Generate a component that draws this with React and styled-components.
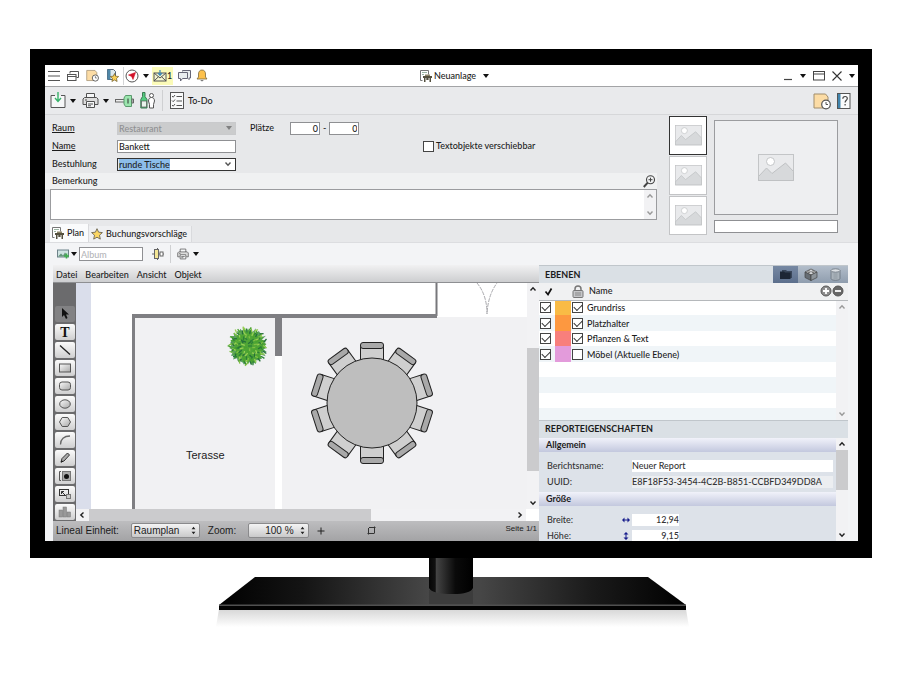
import React, { useState } from "react";
import styled, { createGlobalStyle } from "styled-components";

const INITIAL_LAYERS = [
  { name: "Grundriss", color: "#f9bb45", visible: true, locked: true },
  { name: "Platzhalter", color: "#fd9840", visible: true, locked: true },
  { name: "Pflanzen & Text", color: "#f87f7c", visible: true, locked: true },
  { name: "Möbel (Aktuelle Ebene)", color: "#e39bdb", visible: true, locked: false },
];

const MENU = ["Datei", "Bearbeiten", "Ansicht", "Objekt"];

const TOOLS = [
  { id: "Auswahl", icon: <path d="M5 2v9l2-2 2 4 1.500-1L9 8.500h3z" fill="#111" /> },
  {
    id: "Text",
    icon: (
      <text x="8" y="13" textAnchor="middle" fontFamily="Liberation Serif, serif" fontWeight="700" fontSize="14" fill="#111">
        T
      </text>
    ),
  },
  { id: "Linie", icon: <path d="M3 3.500L13 12.500" stroke="#222" strokeWidth="1.300" /> },
  { id: "Rechteck", icon: <rect x="2.500" y="4" width="11" height="8" fill="url(#shape)" stroke="#555" /> },
  { id: "Abgerundet", icon: <rect x="2.500" y="4" width="11" height="8" rx="2.500" fill="url(#shape)" stroke="#555" /> },
  { id: "Ellipse", icon: <ellipse cx="8" cy="8" rx="5.300" ry="4.200" fill="url(#shape)" stroke="#555" /> },
  { id: "Polygon", icon: <path d="M5.200 3.500h5.600L13.500 8l-2.700 4.500H5.200L2.500 8z" fill="url(#shape)" stroke="#555" /> },
  { id: "Bogen", icon: <path d="M3.500 12.500C3.500 7 7 4 13 4" fill="none" stroke="#666" strokeWidth="1.300" /> },
  {
    id: "Stift",
    icon: (
      <g>
        <path d="M4 12l1-3.500L10.500 3l2 2L7 11z" fill="#aaa" stroke="#333" />
        <path d="M3.500 13l1.500-2.500 1 1z" fill="#111" />
      </g>
    ),
  },
  {
    id: "Bild",
    icon: (
      <g>
        <rect x="5.500" y="3.500" width="8" height="9" fill="#aaa" stroke="#777" />
        <path d="M4 3.500H2.500v9H4" fill="none" stroke="#555" />
        <circle cx="9.500" cy="8.500" r="2.500" fill="#111" />
      </g>
    ),
  },
  {
    id: "Skalieren",
    icon: (
      <g fill="none" stroke="#333">
        <rect x="2.500" y="3.500" width="9" height="6" />
        <path d="M4.500 8V5.500H7M4.500 5.500l5 5" />
        <rect x="9.500" y="8.500" width="4" height="4" fill="#ccc" stroke="#777" />
      </g>
    ),
  },
  {
    id: "Diagramm",
    icon: (
      <g fill="#999" stroke="#777" strokeWidth=".5">
        <rect x="2" y="6" width="3.500" height="7" />
        <rect x="6" y="3" width="3.500" height="10" />
        <rect x="10" y="8" width="3.500" height="5" />
      </g>
    ),
  },
];

// ---------- icons ----------

const Caret = () => (
  <svg width="6" height="4" viewBox="0 0 6 4" aria-hidden="true">
    <path d="M0 0h6L3 4z" fill="#111" />
  </svg>
);

const Chevron = ({ dir = "up", color = "#222" }) => {
  const turn = { up: 0, right: 90, down: 180, left: 270 }[dir];
  return (
    <svg width="8" height="8" viewBox="0 0 8 8" aria-hidden="true">
      <path d="M1.500 5.500L4 2.800l2.500 2.700" fill="none" stroke={color} strokeWidth="1.400" transform={`rotate(${turn} 4 4)`} />
    </svg>
  );
};

const MenuIcon = () => (
  <svg width="12" height="12" viewBox="0 0 12 12">
    <path d="M0 1.500h12M0 6h12M0 10.500h12" stroke="#555" />
  </svg>
);

const WindowsIcon = () => (
  <svg width="12" height="12" viewBox="0 0 12 12" fill="#fff" stroke="#555">
    <path d="M3 3.500v-2h8.500v6H9.500" />
    <rect x=".5" y="4.500" width="8.500" height="6" />
    <path d="M.5 6.500h9" />
  </svg>
);

const FolderClock = ({ size = 13 }) => (
  <svg width={size} height={size} viewBox="0 0 18 17">
    <path d="M1 15.500V1.500h11.500l2.500 3v11z" fill="#fcdca5" stroke="#a08d6c" />
    <circle cx="13" cy="12" r="4.300" fill="#fff" stroke="#555" strokeWidth="1.200" />
    <path d="M13 9.500V12h2" fill="none" stroke="#555" />
  </svg>
);

const DocStar = () => (
  <svg width="13" height="13" viewBox="0 0 13 13">
    <path d="M1.500.5h6l2 2v8h-8z" fill="#dde9ee" stroke="#567" />
    <path d="M1.500.5h3v10h-3z" fill="#4f87a8" />
    <path d="M8.500 4.500l1.200 2.700 3 .3-2.200 2 .6 3-2.600-1.500L5.900 12.500l.6-3-2.200-2 3-.3z" fill="#f9cf55" stroke="#6b5a2a" strokeWidth=".7" />
  </svg>
);

const Compass = () => (
  <svg width="14" height="14" viewBox="0 0 14 14">
    <circle cx="7" cy="7" r="6" fill="#fff" stroke="#555" />
    <path d="M10.500 3.500L8 10.500 6.600 7.400 3.500 6z" fill="#d3132a" stroke="#d3132a" strokeWidth=".6" />
  </svg>
);

const Mail = () => (
  <svg width="14" height="12" viewBox="0 0 14 12" fill="none" stroke="#555">
    <rect x="1" y="3" width="12" height="8" fill="#f4f5d0" />
    <path d="M1 3l6 5 6-5M1 11l4.500-4.300M13 11L8.500 6.700" />
    <path d="M7 0v5M5 3.200L7 5.300l2-2.100" stroke="#3a86b5" strokeWidth="1.200" />
  </svg>
);

const Chat = () => (
  <svg width="13" height="12" viewBox="0 0 13 12" fill="#e9edf0" stroke="#667">
    <path d="M4.500 1.500V.5h8v7.500H11v2" />
    <path d="M.5 2.500h9v6H4.500l-2 2.500V8.500h-2z" />
  </svg>
);

const Bell = () => (
  <svg width="12" height="13" viewBox="0 0 12 13">
    <path d="M6 1C3.500 1 2.500 3 2.500 5v3L1 10h10L9.500 8V5c0-2-1-4-3.500-4z" fill="#fdc14c" stroke="#7b6a3d" strokeWidth=".8" />
    <path d="M4.500 11.300a1.500 1 0 003 0z" fill="#555" />
  </svg>
);

const PlanIcon = () => (
  <svg width="12" height="12" viewBox="0 0 12 12">
    <path d="M2.500 10.500h-2V.5h8v4" fill="#fff" stroke="#777" />
    <path d="M2 2.500h5M2 4.500h2" stroke="#9ab5a2" />
    <path d="M3 6h9v2H3zM4 8h1.500v4H4zM9.500 8H11v4H9.500zM6.300 8h2.300v2H6.300z" fill="#54503f" />
    <path d="M5 4.500h5V6H5z" fill="#8c8468" />
  </svg>
);

const MinimizeIcon = () => (
  <svg width="9" height="10" viewBox="0 0 9 10">
    <path d="M0 8.500h8" stroke="#444" strokeWidth="1.200" />
  </svg>
);

const MaximizeIcon = () => (
  <svg width="12" height="10" viewBox="0 0 12 10" fill="none" stroke="#444">
    <rect x=".5" y=".5" width="11" height="8.500" />
    <path d="M.5 3h11" />
  </svg>
);

const CloseIcon = () => (
  <svg width="10" height="10" viewBox="0 0 10 10">
    <path d="M.5.5l9 9M9.500.5l-9 9" stroke="#333" strokeWidth="1.100" />
  </svg>
);

const SaveIcon = () => (
  <svg width="16" height="17" viewBox="0 0 16 17" fill="none">
    <path d="M5 3.500H1v12h14v-12h-4" fill="#f6f7f8" stroke="#555" />
    <path d="M8 0v9M5 6l3 3.500L11 6" stroke="#38b36b" strokeWidth="1.400" />
  </svg>
);

const Printer = ({ size = 17 }) => (
  <svg width={size} height={size} viewBox="0 0 17 17" fill="#f6f7f8" stroke="#505050">
    <path d="M4.500 6V1.500h8V6" />
    <path d="M4 12.500H1V7l1.500-1.500h12L16 7v5.500h-3" fill="#ddd" />
    <path d="M4.500 9.500h8v6h-8z" />
    <path d="M6 12h5M6 13.800h3M3 8h2" />
  </svg>
);

const Connector = () => (
  <svg width="19" height="14" viewBox="0 0 19 14" stroke="#666">
    <rect x=".5" y="5.500" width="9" height="2.500" fill="#eee" />
    <path d="M10.500 1.500h6v11h-6L9 10V4z" fill="#9be5ae" stroke="#5a9a6c" />
    <path d="M13 4.500v5" stroke="#333" />
    <path d="M17 5v4h1.500V5z" fill="#eee" />
  </svg>
);

const Guests = () => (
  <svg width="15" height="17" viewBox="0 0 15 17">
    <path d="M2.500.5h2.500v4l2 3v8.500H.8V7.500l1.700-3z" fill="#53cc80" stroke="#3d7a53" />
    <path d="M1.500 9h5v6h-5z" fill="#e9f4ec" stroke="#555" strokeWidth=".7" />
    <circle cx="11.500" cy="3.500" r="2" fill="#fff" stroke="#555" />
    <path d="M11.500 5.500c-2 0-3 1.500-3 3.500l1 3.500v3.500h4v-3.500l1-3.500c0-2-1-3.500-3-3.500z" fill="#fff" stroke="#555" />
  </svg>
);

const Checklist = () => (
  <svg width="14" height="17" viewBox="0 0 14 17" fill="none" stroke="#555">
    <rect x=".5" y=".5" width="13" height="16" fill="#f9fafa" />
    <path d="M2 4l1.200 1.200L5 3M2 8.500l1.200 1.200L5 7.500M2 13l1.200 1.200L5 12M6.500 4.500H12M6.500 9H12M6.500 13.500H12" />
  </svg>
);

const HelpIcon = () => (
  <svg width="14" height="16" viewBox="0 0 14 16">
    <rect x=".5" y=".5" width="12.500" height="15" fill="#fafbfb" stroke="#555" />
    <path d="M1 1h2.500v14H1z" fill="#4185ad" />
    <path d="M5.800 5.800c0-1.500.9-2.300 2.300-2.300s2.200.8 2.200 2c0 1.800-2.200 1.800-2.200 4M8.100 11v1.500" fill="none" stroke="#444" strokeWidth="1.200" />
  </svg>
);

const ZoomIcon = () => (
  <svg width="12" height="13" viewBox="0 0 12 13" fill="none" stroke="#444">
    <circle cx="7.500" cy="4.700" r="4" strokeWidth="1.100" />
    <path d="M5.500 4.700h4M7.500 2.700v4" />
    <path d="M4.700 7.700L.8 12" strokeWidth="2" />
  </svg>
);

const Picture = ({ width = 27 }) => (
  <svg width={width} height={(width * 3) / 4} viewBox="0 0 36 27">
    <rect x=".5" y=".5" width="35" height="26" fill="#e9eaec" stroke="#c3c5c7" />
    <path d="M.5 22.500L8.500 14l5.500 5.500L27.500 9l8 8.500v9H.5z" fill="#d7d9db" stroke="#bfc1c3" />
    <circle cx="12.500" cy="7.500" r="4" fill="#fff" stroke="#c3c5c7" />
  </svg>
);

const Star = () => (
  <svg width="12" height="12" viewBox="0 0 12 12">
    <path d="M6 .7l1.600 3.500 3.800.4-2.900 2.600.8 3.900L6 9.200l-3.300 1.900.8-3.900L.6 4.600l3.800-.4z" fill="#fbd663" stroke="#6d6553" strokeWidth=".9" />
  </svg>
);

const AddImage = () => (
  <svg width="13" height="10" viewBox="0 0 13 10">
    <rect x=".5" y="1" width="11" height="7" fill="#cfe3e2" stroke="#6d8289" />
    <path d="M1 7.500l3-3 2 2 2-3 3 4z" fill="#64957a" />
    <path d="M9.500 4.500v5M7 7h5" stroke="#3fae4e" strokeWidth="1.600" />
  </svg>
);

const AlignIcon = () => (
  <svg width="12" height="12" viewBox="0 0 12 12" stroke="#666" fill="#fff">
    <path d="M0 6h12M5.500 0v12" />
    <rect x="2.500" y="1.500" width="4" height="9" fill="#f4e695" />
    <rect x="8" y="4" width="3" height="4" />
  </svg>
);

const LayersIcon = () => (
  <svg width="13" height="11" viewBox="0 0 13 11">
    <path d="M3 1h4l1 1h5v7H3z" fill="#39465a" />
    <path d="M1 2.500h4l1 1h5.500V10H1z" fill="#1d2635" />
  </svg>
);

const BlockIcon = () => (
  <svg width="14" height="13" viewBox="0 0 14 13" stroke="#444" strokeWidth=".7">
    <path d="M1 4l6-3 6 3-6 3z" fill="#d5d8db" />
    <path d="M1 4v5.500l6 3V7z" fill="#666d74" />
    <path d="M13 4v5.500l-6 3V7z" fill="#8d949a" />
    <ellipse cx="5" cy="3.800" rx="1.300" ry=".9" fill="#fff" />
    <ellipse cx="9" cy="3.800" rx="1.300" ry=".9" fill="#fff" />
  </svg>
);

const DatabaseIcon = () => (
  <svg width="11" height="13" viewBox="0 0 11 13" stroke="#68727c" strokeWidth=".8">
    <path d="M1 2.500v8c0 1 2 1.800 4.500 1.800s4.500-.8 4.500-1.800v-8z" fill="#aab3bb" />
    <ellipse cx="5.500" cy="2.500" rx="4.500" ry="1.700" fill="#dce0e4" />
    <path d="M3.500 6h4M3.500 8h4M3.500 10h4" stroke="#8a949d" />
  </svg>
);

const Lock = () => (
  <svg width="12" height="13" viewBox="0 0 12 13">
    <path d="M3 6V4a3 3 0 016 0v2" fill="none" stroke="#777" strokeWidth="1.500" />
    <rect x="1" y="5.500" width="10" height="7" rx="1" fill="#c5c6c8" stroke="#777" />
    <path d="M3 8h6M3 10h6" stroke="#888" />
  </svg>
);

const RoundSign = ({ minus }) => (
  <svg width="12" height="12" viewBox="0 0 12 12">
    <circle cx="6" cy="6" r="5" fill={minus ? "#686868" : "#8e8e8e"} stroke="#555" />
    <path d={minus ? "M3 6h6" : "M3 6h6M6 3v6"} stroke="#fff" strokeWidth="1.800" />
  </svg>
);

const UpDown = () => (
  <svg width="5" height="9" viewBox="0 0 6 9">
    <path d="M3 0l2.300 3H.7zM3 9L.7 6h4.600z" fill="#222" />
  </svg>
);

const SizeArrow = ({ vertical }) => (
  <svg width="8" height="8" viewBox="0 0 8 8">
    <path d="M0 4l2.500-2.500v2h3v-2L8 4 5.500 6.500v-2h-3v2z" fill="#171c8c" transform={vertical ? "rotate(90 4 4)" : undefined} />
  </svg>
);

const CropIcon = () => (
  <svg width="9" height="9" viewBox="0 0 9 9" fill="none" stroke="#333">
    <path d="M2 1.500h6.500M7.500.5V7.500M.5 7.500h6.500M1.500 8.500V2" />
  </svg>
);

// spiky blob used for the leaves of the plant
const leaves = (r, seed) => {
  const pts = [];
  for (let i = 0; i < 60; i++) {
    const a = (i / 60) * Math.PI * 2;
    const wobble = Math.abs(Math.sin(i * 12.9 + seed) * 43.7) % 1;
    const len = i % 2 ? r * (0.86 + wobble * 0.18) : r * (0.68 + wobble * 0.22);
    pts.push(`${(Math.cos(a) * len).toFixed(1)},${(Math.sin(a) * len).toFixed(1)}`);
  }
  return pts.join(" ");
};

// short blades scattered over the leaves, spread by the golden angle
const BLADES = Array.from({ length: 110 }, (_, i) => {
  const a = i * 2.4;
  const d = Math.sqrt(i / 110) * 17;
  const turn = a + Math.sin(i * 7) * 0.8;
  return {
    x: Math.cos(a) * d,
    y: Math.sin(a) * d,
    dx: Math.cos(turn) * 4,
    dy: Math.sin(turn) * 4,
    color: ["#2c8038", "#7fc043", "#4aa32f", "#98cf55", "#256f3a"][(i * 7) % 5],
  };
});

const Plant = ({ x, y }) => (
  <g transform={`translate(${x} ${y})`}>
    <polygon points={leaves(20, 1)} fill="#5b9f62" />
    <polygon points={leaves(18, 5)} fill="#4fa536" />
    {BLADES.map((b, i) => (
      <path key={i} d={`M${b.x.toFixed(1)} ${b.y.toFixed(1)}l${b.dx.toFixed(1)} ${b.dy.toFixed(1)}`} stroke={b.color} strokeWidth="1.300" />
    ))}
  </g>
);

const RoundTable = ({ x, y, seats }) => (
  <g transform={`translate(${x} ${y})`} stroke="#222">
    {Array.from({ length: seats }, (_, i) => (
      <g key={i} transform={`rotate(${(360 / seats) * i})`}>
        <rect x="-11.500" y="-58" width="23" height="18" rx="1" fill="#cfcfcf" />
        <rect x="-11.500" y="-60.500" width="23" height="6" rx="2.500" fill="#a9a9a9" />
      </g>
    ))}
    <circle r="45" fill="#bebebe" />
  </g>
);

const FloorPlan = () => (
  <PlanSvg role="img" aria-label="Raumplan">
    <rect x="43" y="34" width="100%" height="100%" fill="#f1f1f3" />
    <path d="M345.500 0v33" stroke="#77777b" strokeWidth="2" />
    <path d="M41 31h305v4H44v200h-3z" fill="#7f7f83" />
    <rect x="184" y="35" width="7" height="38" fill="#7f7f83" />
    <rect x="184" y="73" width="7" height="160" fill="#fff" />
    <path d="M386 0q10 12 10 31q1-19 10-31" fill="none" stroke="#aaaaae" strokeDasharray="4 1" />
    <Plant x={157} y={63} />
    <RoundTable x={281} y={120} seats={10} />
    <text x="95" y="176" fontSize="11" fill="#222" fontFamily="Liberation Sans, Arial, sans-serif">
      Terasse
    </text>
  </PlanSvg>
);

const Stand = () => (
  <StandSvg viewBox="201 558 500 72" aria-hidden="true">
    <defs>
      <linearGradient id="base">
        <stop offset="0" stopColor="#000" />
        <stop offset=".18" stopColor="#141414" />
        <stop offset=".45" stopColor="#474747" />
        <stop offset=".56" stopColor="#464646" />
        <stop offset=".8" stopColor="#1a1a1a" />
        <stop offset="1" stopColor="#000" />
      </linearGradient>
      <linearGradient id="neck">
        <stop offset="0" stopColor="#050505" />
        <stop offset=".14" stopColor="#111" />
        <stop offset=".17" stopColor="#444" />
        <stop offset=".6" stopColor="#0a0a0a" />
        <stop offset="1" stopColor="#000" />
      </linearGradient>
      <linearGradient id="shadow" x1="0" x2="0" y1="0" y2="1">
        <stop offset="0" stopColor="#d6d6d6" />
        <stop offset="1" stopColor="#fff" />
      </linearGradient>
    </defs>
    <path d="M219 609h467l3 18H216z" fill="url(#shadow)" />
    <path d="M255 577h393l38 28H219z" fill="url(#base)" />
    <path d="M219 604.500h467v2H219z" fill="#505050" />
    <path d="M219 606h467v4H219z" fill="#030303" />
    <path d="M429 590h44v14h-44z" fill="#3c3c3c" />
    <path d="M429 558h44v30q-3 6-20 6-21 0-24-6z" fill="url(#neck)" />
  </StandSvg>
);

const ScrollBar = ({ horizontal, thumbStart, thumb, muted }) => (
  <ScrollTrack $horizontal={horizontal}>
    <ScrollButton aria-label="Zurück">
      <Chevron dir={horizontal ? "left" : "up"} color={muted ? "#999" : "#222"} />
    </ScrollButton>
    <ScrollLane $horizontal={horizontal}>
      {thumb && <ScrollThumb $horizontal={horizontal} $start={thumbStart} $size={thumb} />}
    </ScrollLane>
    <ScrollButton aria-label="Weiter">
      <Chevron dir={horizontal ? "right" : "down"} color={muted ? "#999" : "#222"} />
    </ScrollButton>
  </ScrollTrack>
);

const App = () => {
  const [layers, setLayers] = useState(INITIAL_LAYERS);
  const [tool, setTool] = useState("Auswahl");
  const [movable, setMovable] = useState(false);
  const [thumb, setThumb] = useState(0);

  const toggleLayer = (index, key) => {
    setLayers(layers.map((l, i) => (i === index ? { ...l, [key]: !l[key] } : l)));
  };

  return (
    <Page>
      <GlobalStyle />
      <Monitor>
        <Screen>
          <TitleBar>
            <TitleGroup>
              <IconButton aria-label="Menü"><MenuIcon /></IconButton>
              <IconButton aria-label="Fenster"><WindowsIcon /></IconButton>
              <IconButton aria-label="Verlauf"><FolderClock /></IconButton>
              <IconButton aria-label="Favoriten"><DocStar /></IconButton>
              <NavGroup>
                <SplitButton aria-label="Navigation"><Compass /><Caret /></SplitButton>
                <MailButton><Mail />1</MailButton>
                <IconButton aria-label="Chat"><Chat /></IconButton>
                <IconButton aria-label="Hinweise"><Bell /></IconButton>
              </NavGroup>
            </TitleGroup>
            <TitleButton><PlanIcon /><span>Neuanlage</span><Caret /></TitleButton>
            <TitleGroup $end>
              <IconButton aria-label="Minimieren"><MinimizeIcon /></IconButton>
              <IconButton aria-label="Optionen"><Caret /></IconButton>
              <IconButton aria-label="Maximieren"><MaximizeIcon /></IconButton>
              <IconButton aria-label="Schließen"><CloseIcon /></IconButton>
              <IconButton aria-label="Mehr"><Caret /></IconButton>
            </TitleGroup>
          </TitleBar>

          <Toolbar>
            <SplitButton aria-label="Speichern"><SaveIcon /><Caret /></SplitButton>
            <SplitButton aria-label="Drucken"><Printer /><Caret /></SplitButton>
            <IconButton aria-label="Verbinden"><Connector /></IconButton>
            <IconButton aria-label="Gäste"><Guests /></IconButton>
            <Divider />
            <TextButton><Checklist />To-Do</TextButton>
            <Spacer />
            <IconButton aria-label="Wiedervorlage"><FolderClock size={18} /></IconButton>
            <IconButton aria-label="Hilfe"><HelpIcon /></IconButton>
          </Toolbar>

          <Upper>
            <FormSide>
              <Form>
                <Label htmlFor="raum" $link>Raum</Label>
                <SelectBox>
                  <Select id="raum" disabled><option>Restaurant</option></Select>
                  <Caret />
                </SelectBox>
                <Seats>
                  <Label htmlFor="von">Plätze</Label>
                  <NumberInput id="von" defaultValue="0" />-
                  <NumberInput aria-label="Plätze bis" defaultValue="0" />
                </Seats>
                <span />
                <Label htmlFor="name" $link>Name</Label>
                <TextInput id="name" defaultValue="Bankett" />
                <span />
                <CheckLabel>
                  <Check type="checkbox" checked={movable} onChange={() => setMovable(!movable)} />
                  Textobjekte verschiebbar
                </CheckLabel>
                <Label htmlFor="bestuhlung">Bestuhlung</Label>
                <SelectBox $active>
                  <Select id="bestuhlung"><option>runde Tische</option></Select>
                  <Chevron dir="down" color="#555" />
                </SelectBox>
              </Form>
              <RemarkHead>
                <Label htmlFor="bemerkung">Bemerkung</Label>
                <IconButton aria-label="Vergrößern"><ZoomIcon /></IconButton>
              </RemarkHead>
              <RemarkBox>
                <TextArea id="bemerkung" />
                <ScrollBar muted />
              </RemarkBox>
              <Tabs>
                <Tab $active><PlanIcon />Plan</Tab>
                <Tab><Star />Buchungsvorschläge</Tab>
              </Tabs>
            </FormSide>
            <Thumbs>
              {[0, 1, 2].map((i) => (
                <Thumb key={i} $active={thumb === i} onClick={() => setThumb(i)} aria-label={`Bild ${i + 1}`}>
                  <Picture />
                </Thumb>
              ))}
            </Thumbs>
            <Preview>
              <PreviewBox><Picture width={36} /></PreviewBox>
              <TextInput aria-label="Bildtitel" />
            </Preview>
          </Upper>

          <PlanBar>
            <SplitButton $tight aria-label="Bild einfügen"><AddImage /><Caret /></SplitButton>
            <AlbumInput aria-label="Album" placeholder="Album" />
            <IconButton aria-label="Ausrichten"><AlignIcon /></IconButton>
            <Divider />
            <SplitButton aria-label="Plan drucken"><Printer size={12} /><Caret /></SplitButton>
          </PlanBar>

          <Work>
            <Editor>
              <MenuBar>
                {MENU.map((m) => (
                  <MenuItem key={m}>{m}</MenuItem>
                ))}
              </MenuBar>
              <EditorBody>
                <Palette>
                  <svg width="0" height="0">
                    <defs>
                      <linearGradient id="shape" x1="0" y1="0" x2="1" y2="1">
                        <stop offset="0" stopColor="#fafafa" />
                        <stop offset="1" stopColor="#a8a8a8" />
                      </linearGradient>
                    </defs>
                  </svg>
                  {TOOLS.map(({ id, icon }) => (
                    <Tool key={id} $active={tool === id} onClick={() => setTool(id)} aria-label={id}>
                      <svg width="16" height="16" viewBox="0 0 16 16">{icon}</svg>
                    </Tool>
                  ))}
                </Palette>
                <CanvasArea>
                  <Ruler />
                  <FloorPlan />
                  <ScrollBar thumbStart={53} thumb={123} />
                </CanvasArea>
                <BottomScroll>
                  <ScrollBar horizontal thumbStart={0} thumb={282} />
                </BottomScroll>
              </EditorBody>
              <StatusBar>
                <label htmlFor="einheit">Lineal Einheit:</label>
                <StatusSelectBox>
                  <StatusSelect id="einheit"><option>Raumplan</option></StatusSelect>
                  <UpDown />
                </StatusSelectBox>
                <label htmlFor="zoom">Zoom:</label>
                <StatusSelectBox>
                  <StatusSelect id="zoom" $end><option>100 %</option></StatusSelect>
                  <UpDown />
                </StatusSelectBox>
                <PlusButton aria-label="Vergrößern">
                  <svg width="8" height="8"><path d="M4 .5v7M.5 4h7" stroke="#222" /></svg>
                </PlusButton>
                <IconButton aria-label="Zuschneiden"><CropIcon /></IconButton>
                <PageInfo>Seite 1/1</PageInfo>
              </StatusBar>
            </Editor>

            <SidePanel>
              <PanelHead>
                <PanelTitle>EBENEN</PanelTitle>
                <PanelTab $active aria-label="Ebenen"><LayersIcon /></PanelTab>
                <PanelTab aria-label="Objekte"><BlockIcon /></PanelTab>
                <PanelTab aria-label="Daten"><DatabaseIcon /></PanelTab>
              </PanelHead>
              <LayerTable>
                <colgroup>
                  <col width="16" />
                  <col width="16" />
                  <col width="15" />
                  <col />
                  <col width="12" />
                </colgroup>
                <thead>
                  <tr>
                    <th aria-label="Sichtbar">
                      <svg width="9" height="9" viewBox="0 0 9 9"><path d="M1.500 4.500L4 7.500 7.500 1.500" fill="none" stroke="#111" strokeWidth="1.700" /></svg>
                    </th>
                    <th aria-label="Farbe" />
                    <th aria-label="Gesperrt"><Lock /></th>
                    <th colSpan={2}>
                      <NameHead>
                        Name
                        <Spacer />
                        <IconButton aria-label="Ebene hinzufügen"><RoundSign /></IconButton>
                        <IconButton aria-label="Ebene entfernen"><RoundSign minus /></IconButton>
                      </NameHead>
                    </th>
                  </tr>
                </thead>
                <tbody>
                  {layers.map((layer, i) => (
                    <tr key={layer.name}>
                      <td>
                        <Check type="checkbox" aria-label={`${layer.name} sichtbar`} checked={layer.visible} onChange={() => toggleLayer(i, "visible")} />
                      </td>
                      <Swatch $color={layer.color} />
                      <td>
                        <Check type="checkbox" aria-label={`${layer.name} gesperrt`} checked={layer.locked} onChange={() => toggleLayer(i, "locked")} />
                      </td>
                      <td>{layer.name}</td>
                      {i === 0 && (
                        <ScrollCell rowSpan={8}><ScrollBar muted /></ScrollCell>
                      )}
                    </tr>
                  ))}
                  {[0, 1, 2, 3].map((i) => (
                    <tr key={i}><td colSpan={4} /></tr>
                  ))}
                </tbody>
              </LayerTable>
              <PanelHead>
                <PanelTitle>REPORTEIGENSCHAFTEN</PanelTitle>
              </PanelHead>
              <Report>
                <ReportBody>
                  <SectionTitle>Allgemein</SectionTitle>
                  <Fields>
                    <label htmlFor="bericht">Berichtsname:</label>
                    <FieldInput id="bericht" defaultValue="Neuer Report" />
                    <label htmlFor="uuid">UUID:</label>
                    <FieldInput id="uuid" readOnly value="E8F18F53-3454-4C2B-B851-CCBFD349DD8A" />
                  </Fields>
                  <SectionTitle>Größe</SectionTitle>
                  <Fields $sizes>
                    <label htmlFor="breite">Breite:</label>
                    <SizeArrow />
                    <FieldInput id="breite" $number defaultValue="12,94" />
                    <label htmlFor="hoehe">Höhe:</label>
                    <SizeArrow vertical />
                    <FieldInput id="hoehe" $number defaultValue="9,15" />
                  </Fields>
                </ReportBody>
                <ScrollBar thumbStart={0} thumb={40} />
              </Report>
            </SidePanel>
          </Work>
        </Screen>
      </Monitor>
      <Stand />
    </Page>
  );
};

export default App;

const GlobalStyle = createGlobalStyle`
  * {
    box-sizing: border-box;
  }
  body {
    margin: 0;
    background: #fff;
  }
  button, input, select, textarea {
    font: inherit;
    color: inherit;
    margin: 0;
    padding: 0;
    border: 0;
    border-radius: 0;
    background: none;
  }
  svg {
    display: block;
    flex: none;
  }
`;

const Page = styled.main`
  padding: 49px 28px 0 30px;
  font-family: Lato, "Open Sans", sans-serif;
  font-size: 9px;
  line-height: 12px;
  font-weight: 500;
  color: #1c1c1c;
`;

const Monitor = styled.div`
  background: #000;
  padding: 16px 14px 17px 15px;
`;

const Screen = styled.div`
  display: flex;
  flex-direction: column;
  background: #f3f4f6;
  overflow: hidden;
`;

const IconButton = styled.button`
  display: flex;
  align-items: center;
  justify-content: center;
  flex: none;
`;

const SplitButton = styled(IconButton)`
  gap: ${({ $tight }) => ($tight ? 1 : 4)}px;
`;

const TextButton = styled(IconButton)`
  gap: 4px;
`;

const Divider = styled.span`
  width: 1px;
  margin: 0 1px;
  align-self: stretch;
  background: #cfd0d2;
`;

const Spacer = styled.span`
  flex: 1;
`;

const TitleBar = styled.header`
  display: grid;
  grid-template-columns: 1fr auto 1fr;
  align-items: center;
  height: 22px;
  padding: 0 3px;
  background: #fff;
  border-bottom: 1px solid #a3a4a6;
`;

const TitleGroup = styled.div`
  display: flex;
  align-items: center;
  gap: 7px;
  justify-content: ${({ $end }) => ($end ? "flex-end" : "flex-start")};
`;

const NavGroup = styled.div`
  display: flex;
  align-items: center;
  gap: 5px;
  margin-left: -3px;
  padding-left: 1px;
  border-left: 1px solid #d4d5d7;
`;

const TitleButton = styled(IconButton)`
  gap: 2px;
  padding-left: 6px;

  span {
    margin-right: 5px;
  }
`;

const MailButton = styled(IconButton)`
  height: 18px;
  padding: 0 1px;
  margin-left: -2px;
  background: #fbfbb8;
`;

const Toolbar = styled.div`
  display: flex;
  align-items: center;
  gap: 6px;
  height: 28px;
  padding: 3px 7px 3px 5px;
  background: #e9eaec;
  border-bottom: 1px solid #d6d7d9;
`;

const Upper = styled.div`
  display: flex;
  padding: 1px 20px 0 0;
  background: #e7e8ea;
  border-bottom: 1px solid #dcdde0;
`;

const FormSide = styled.div`
  flex: 1;
  display: flex;
  flex-direction: column;
  margin-right: 12px;
`;

const Form = styled.div`
  display: grid;
  grid-template-columns: 65px 119px 187px 1fr;
  grid-auto-rows: 18px;
  align-items: center;
  padding: 3px 0 0 7px;
`;

const Label = styled.label`
  text-decoration: ${({ $link }) => ($link ? "underline" : "none")};
`;

const TextInput = styled.input`
  width: 100%;
  height: 13px;
  padding: 0 1px;
  background: #fff;
  border: 1px solid #8f9093;
`;

const NumberInput = styled(TextInput)`
  width: 30px;
  text-align: right;
`;

const SelectBox = styled.div`
  position: relative;
  height: 13px;
  display: flex;

  svg {
    position: absolute;
    right: 4px;
    top: 50%;
    transform: translateY(-50%);
    pointer-events: none;
    opacity: ${({ $active }) => ($active ? 1 : 0.4)};
  }

  select {
    border: 1px solid ${({ $active }) => ($active ? "#333" : "#c9cacc")};
    background: ${({ $active }) =>
      $active ? "linear-gradient(to right, transparent 1px, #8cbdea 1px, #8cbdea 52px, #fff 52px)" : "#cbcccd"};
  }
`;

const Select = styled.select`
  appearance: none;
  width: 100%;
  padding: 0 1px;
  line-height: 11px;
  opacity: 1;

  &:disabled {
    color: #8f9092;
  }
`;

const Seats = styled.div`
  display: flex;
  align-items: center;
  gap: 3px;
  padding-left: 14px;

  label {
    width: 37px;
  }
`;

const CheckLabel = styled.label`
  display: flex;
  align-items: center;
  gap: 2px;
`;

const Check = styled.input`
  appearance: none;
  display: block;
  width: 11px;
  height: 11px;
  flex: none;
  background: #fff;
  border: 1px solid #444;

  &:checked::after {
    content: "";
    display: block;
    width: 7px;
    height: 4px;
    margin: 1px;
    border: solid #333;
    border-width: 0 0 1px 1px;
    transform: rotate(-45deg);
  }
`;

const RemarkHead = styled.div`
  display: flex;
  align-items: center;
  justify-content: space-between;
  height: 16px;
  padding: 0 2px 0 7px;
  background: #f0f1f2;
`;

const RemarkBox = styled.div`
  display: flex;
  margin: 0 0 0 5px;
  background: #fff;
  border: 1px solid #9b9c9f;
`;

const TextArea = styled.textarea`
  flex: 1;
  height: 29px;
  resize: none;
`;

const Tabs = styled.div`
  display: flex;
  align-items: flex-end;
  flex: 1;
  padding-left: 5px;
`;

const Tab = styled.button`
  display: flex;
  align-items: center;
  gap: 3px;
  height: ${({ $active }) => ($active ? 18 : 16)}px;
  padding: 0 4px 0 2px;
  background: ${({ $active }) => ($active ? "#fafbfc" : "#eff0f2")};
  border-right: 1px solid #d9dadd;
`;

const Thumbs = styled.div`
  display: flex;
  flex-direction: column;
  gap: 1px;
  padding-bottom: 7px;
  margin-right: 7px;
`;

const Thumb = styled.button`
  display: grid;
  place-items: center;
  width: 38px;
  height: 39px;
  background: #fff;
  border: 1px solid ${({ $active }) => ($active ? "#333" : "#c3c4c6")};
`;

const Preview = styled.div`
  display: flex;
  flex-direction: column;
  gap: 5px;
  width: 124px;
  padding-top: 4px;
`;

const PreviewBox = styled.div`
  display: grid;
  place-items: center;
  height: 95px;
  background: #eeeff1;
  border: 1px solid #9b9c9f;
`;

const PlanBar = styled.div`
  display: flex;
  align-items: center;
  gap: 5px;
  height: 22px;
  padding: 2px 12px;
`;

const AlbumInput = styled(TextInput)`
  width: 64px;
  height: 14px;
  margin-left: -3px;
  margin-right: 4px;

  &::placeholder {
    color: #b4b5b8;
    opacity: 1;
  }
`;

const Work = styled.div`
  display: flex;
  padding: 0 10px 0 8px;
`;

const Editor = styled.section`
  flex: 1;
  min-width: 0;
  display: flex;
  flex-direction: column;
`;

const MenuBar = styled.nav`
  display: flex;
  align-items: center;
  gap: 8px;
  height: 18px;
  padding: 2px 3px 0;
  background: linear-gradient(#f1f1f2, #cdced0);
  border-bottom: 1px solid #8e8f92;
`;

const MenuItem = styled.button`
  line-height: 12px;
`;

const EditorBody = styled.div`
  display: grid;
  grid-template-columns: 23px 1fr;
  grid-template-rows: 1fr 12px;
`;

const Palette = styled.div`
  grid-row: 1 / 3;
  display: flex;
  flex-direction: column;
  align-items: center;
  gap: 2px;
  padding: 21px 0 1px;
  background: #6b6b6d;
`;

const Tool = styled.button`
  display: grid;
  place-items: center;
  width: 20px;
  height: 16px;
  border-radius: 2px;
  background: ${({ $active }) => ($active ? "#828284" : "linear-gradient(#fbfbfb, #cfcfd0)")};
`;

const CanvasArea = styled.div`
  display: flex;
  min-width: 0;
  background: #fff;
`;

const Ruler = styled.div`
  width: 15px;
  background: #dadeeb;
`;

const PlanSvg = styled.svg`
  flex: 1;
  min-width: 0;
  height: 226px;
`;

const BottomScroll = styled.div`
  display: flex;
  padding-right: 13px;
  background: #fff;
`;

const ScrollTrack = styled.div`
  display: flex;
  flex-direction: ${({ $horizontal }) => ($horizontal ? "row" : "column")};
  flex: ${({ $horizontal }) => ($horizontal ? "1" : "0 0 12px")};
  background: #f2f2f4;
`;

const ScrollButton = styled.button`
  display: grid;
  place-items: center;
  width: 12px;
  height: 12px;
`;

const ScrollLane = styled.div`
  flex: 1;
  padding: ${({ $horizontal }) => ($horizontal ? "0 1px" : "0")};
`;

const ScrollThumb = styled.div`
  background: #cbcbcd;
  width: ${({ $horizontal, $size }) => ($horizontal ? `${$size}px` : "100%")};
  height: ${({ $horizontal, $size }) => ($horizontal ? "100%" : `${$size}px`)};
  margin-top: ${({ $start }) => $start}px;
`;

const StatusBar = styled.footer`
  display: flex;
  align-items: center;
  gap: 12px;
  flex: 1;
  padding: 0 2px 0 3px;
  font-family: "Liberation Sans", Arial, sans-serif;
  font-size: 10px;
  background: linear-gradient(#bdbdbf, #a3a3a5);
`;

const StatusSelectBox = styled.div`
  position: relative;

  svg {
    position: absolute;
    right: 4px;
    top: 3px;
    pointer-events: none;
  }

  & + label {
    margin-left: -4px;
  }
`;

const StatusSelect = styled.select`
  appearance: none;
  display: block;
  width: ${({ $end }) => ($end ? 61 : 69)}px;
  height: 15px;
  padding: ${({ $end }) => ($end ? "0 2px 0 16px" : "0 2px")};
  border: 1px solid #8a8a8c;
  border-radius: 2px;
  background: linear-gradient(#f4f4f4, #c9c9ca);
`;

const PlusButton = styled(IconButton)`
  margin: 0 30px 0 -4px;
`;

const PageInfo = styled.span`
  margin-left: auto;
  padding-bottom: 4px;
  font-size: 8px;
`;

const SidePanel = styled.aside`
  width: 309px;
  flex: none;
  display: flex;
  flex-direction: column;
`;

const PanelHead = styled.div`
  display: flex;
  align-items: center;
  height: 18px;
  padding-left: 6px;
  background: #dae0e5;
  border-top: 1px solid #c0c6cb;
`;

const PanelTitle = styled.h2`
  flex: 1;
  margin: 0;
  font-size: 9px;
  line-height: 16px;
  font-weight: 700;
`;

const PanelTab = styled.button`
  display: grid;
  place-items: center;
  align-self: stretch;
  width: 25px;
  background: ${({ $active }) =>
    $active ? "linear-gradient(#7688a3, #5c6f8c)" : "linear-gradient(#b2bdca, #8f9dae)"};
`;

const LayerTable = styled.table`
  width: 100%;
  table-layout: fixed;
  border-collapse: collapse;

  th {
    height: 17px;
    padding: 0;
    font-weight: 500;
    text-align: left;
    background: #f0f1f2;
    border-bottom: 1px solid #b5b8bb;
  }
  th:first-child {
    padding-left: 5px;
  }
  th:nth-child(3) {
    padding-left: 1px;
  }
  td {
    height: 15px;
    padding: 0 0 0 1px;
    line-height: 11px;
  }
  td:nth-child(4) {
    white-space: nowrap;
  }
  tbody tr {
    background: #fff;
  }
  tbody tr:nth-child(even) {
    background: #f0f5f8;
  }
  tbody tr:nth-child(even) td {
    height: 16px;
  }
  tbody tr:last-child td {
    height: 11px;
  }
`;

const NameHead = styled.div`
  display: flex;
  align-items: center;
  padding: 0 4px 0 3px;
`;

const Swatch = styled.td`
  background: ${({ $color }) => $color};
`;

const ScrollCell = styled.td`
  && {
    height: 119px;
    padding: 0;
    background: #f2f3f5;
  }

  > div {
    height: 119px;
  }
`;

const Report = styled.div`
  display: flex;
  height: 103px;
`;

const ReportBody = styled.div`
  flex: 1;
  overflow: hidden;
  background: #dde2e9;
`;

const SectionTitle = styled.h3`
  margin: 0;
  padding: 0 7px;
  font-size: 9px;
  line-height: 14px;
  font-weight: 700;
  background: linear-gradient(#f1f2fa, #c3c8de);
`;

const Fields = styled.div`
  display: grid;
  grid-template-columns: ${({ $sizes }) => ($sizes ? "75px 10px 47px" : "85px 1fr")};
  row-gap: 4px;
  align-items: center;
  padding: ${({ $sizes }) => ($sizes ? "8px" : "8px 3px 4px 8px")};
  color: #333;
`;

const FieldInput = styled.input`
  width: 100%;
  height: 12px;
  text-align: ${({ $number }) => ($number ? "right" : "left")};
  background: #fff;

  &:read-only {
    background: #eceef1;
  }
`;

const StandSvg = styled.svg`
  width: 500px;
  height: 72px;
  margin: 0 auto;
`;
